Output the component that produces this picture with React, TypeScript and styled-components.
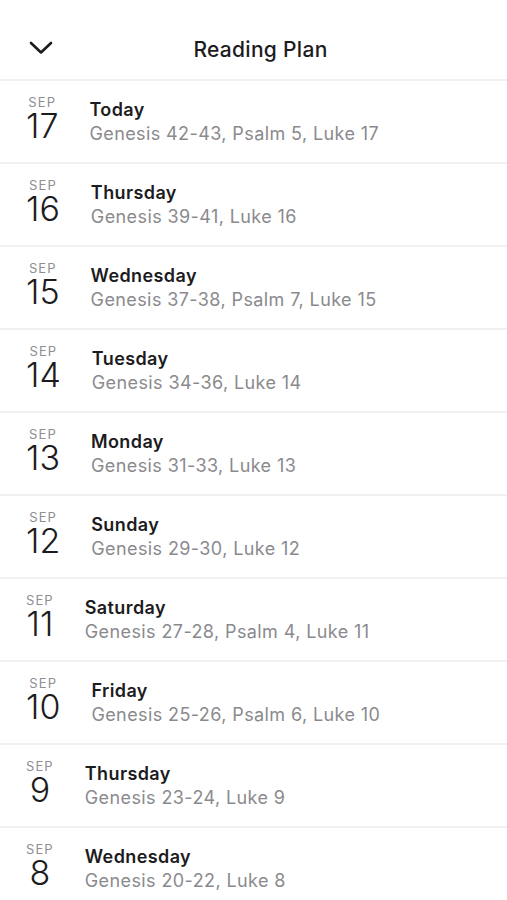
import styled, { createGlobalStyle } from 'styled-components';

const GlobalStyle = createGlobalStyle`
  * {
    box-sizing: border-box;
  }

  body {
    margin: 0;
    background: #ffffff;
    font-family: Inter, 'Noto Sans', sans-serif;
    -webkit-font-smoothing: antialiased;
  }
`;

const Screen = styled.div`
  width: 507px;
  min-height: 900px;
  background: #ffffff;
  overflow: hidden;
`;

const Header = styled.header`
  height: 81px;
  display: flex;
  align-items: center;
  position: relative;
  padding-top: 20px;
  border-bottom: 2px solid #f0f0f0;
`;

const BackButton = styled.button`
  border: 0;
  background: none;
  padding: 0;
  margin-left: 29px;
  margin-top: -4px;
  width: 24px;
  height: 16px;
  display: flex;
  align-items: center;
  justify-content: center;
  color: #1c1c1e;
`;

const Title = styled.h1`
  position: absolute;
  left: 0;
  right: 0;
  margin: 0;
  text-align: center;
  padding-left: 14px;
  font-size: 21px;
  font-weight: 500;
  letter-spacing: 0.3px;
  line-height: 26px;
  color: #1c1c1e;
  pointer-events: none;
`;

const List = styled.ul`
  list-style: none;
  margin: 0;
  padding: 0;
`;

const Row = styled.li`
  height: 83px;
  display: flex;
  align-items: center;
  gap: 31px;
  padding-left: 26px;
  border-bottom: 2px solid #f0f0f0;
`;

const DateBlock = styled.div`
  display: flex;
  flex-direction: column;
  align-items: center;
  margin-top: -5px;
`;

const Month = styled.span`
  font-size: 13px;
  letter-spacing: 1.1px;
  color: #8e8e93;
  line-height: 13px;
`;

const Day = styled.span`
  font-size: 34px;
  font-weight: 300;
  line-height: 33px;
  color: #1c1c1e;
`;

const Info = styled.div`
  display: flex;
  flex-direction: column;
  gap: 2px;
`;

const DayName = styled.span`
  font-size: 18px;
  font-weight: 600;
  letter-spacing: 0.4px;
  color: #1c1c1e;
  line-height: 22px;
`;

const Passages = styled.span`
  font-size: 18px;
  letter-spacing: 0.4px;
  color: #8a8a8e;
  line-height: 22px;
`;

const readings = [
  { day: 17, name: 'Today', text: 'Genesis 42-43, Psalm 5, Luke 17' },
  { day: 16, name: 'Thursday', text: 'Genesis 39-41, Luke 16' },
  { day: 15, name: 'Wednesday', text: 'Genesis 37-38, Psalm 7, Luke 15' },
  { day: 14, name: 'Tuesday', text: 'Genesis 34-36, Luke 14' },
  { day: 13, name: 'Monday', text: 'Genesis 31-33, Luke 13' },
  { day: 12, name: 'Sunday', text: 'Genesis 29-30, Luke 12' },
  { day: 11, name: 'Saturday', text: 'Genesis 27-28, Psalm 4, Luke 11' },
  { day: 10, name: 'Friday', text: 'Genesis 25-26, Psalm 6, Luke 10' },
  { day: 9, name: 'Thursday', text: 'Genesis 23-24, Luke 9' },
  { day: 8, name: 'Wednesday', text: 'Genesis 20-22, Luke 8' },
];

const App = () => {
  return (
    <Screen>
      <GlobalStyle />
      <Header>
        <BackButton aria-label="Close">
          <svg width="24" height="14" viewBox="0 0 24 14" fill="none">
            <path
              d="M2 2 L12 11.5 L22 2"
              stroke="currentColor"
              strokeWidth="2.6"
              strokeLinecap="round"
              strokeLinejoin="round"
            />
          </svg>
        </BackButton>
        <Title>Reading Plan</Title>
      </Header>

      <List>
        {readings.map((r) => (
          <Row key={r.day}>
            <DateBlock>
              <Month>SEP</Month>
              <Day>{r.day}</Day>
            </DateBlock>
            <Info>
              <DayName>{r.name}</DayName>
              <Passages>{r.text}</Passages>
            </Info>
          </Row>
        ))}
      </List>
    </Screen>
  );
};

export default App;
